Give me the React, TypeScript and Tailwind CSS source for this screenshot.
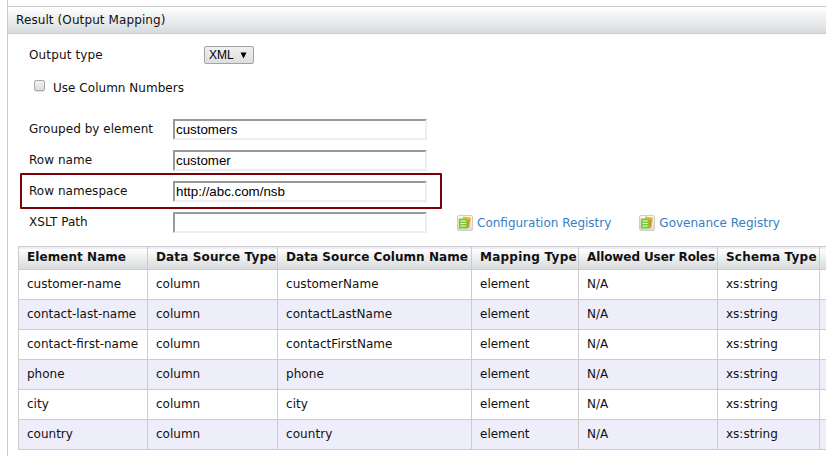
import type { ReactNode } from 'react';

const columns = [
  { title: 'Element Name', width: 'w-[129px]', tracking: 'tracking-[0.06px]' },
  { title: 'Data Source Type', width: 'w-[130px]', tracking: 'tracking-[0.14px]' },
  { title: 'Data Source Column Name', width: 'w-[194px]', tracking: 'tracking-[0.06px]' },
  { title: 'Mapping Type', width: 'w-[107px]', tracking: 'tracking-[0.24px]' },
  { title: 'Allowed User Roles', width: 'w-[139px]', tracking: 'tracking-[-0.1px]' },
  { title: 'Schema Type', width: 'w-[102px]', tracking: 'tracking-[0.2px]' },
  { title: '', width: 'w-[80px]', tracking: 'tracking-normal' },
];

const rows = [
  ['customer-name', 'customerName'],
  ['contact-last-name', 'contactLastName'],
  ['contact-first-name', 'contactFirstName'],
  ['phone', 'phone'],
  ['city', 'city'],
  ['country', 'country'],
].map(([element, source]) => [element, 'column', source, 'element', 'N/A', 'xs:string', '']);

function RegistryIcon() {
  return (
    <svg width="16" height="16" viewBox="0 0 16 16" className="shrink-0">
      <defs>
        <linearGradient id="tile" x1="0" y1="0" x2="0" y2="1">
          <stop offset="0" stopColor="#fafafa" />
          <stop offset="1" stopColor="#dcdcdc" />
        </linearGradient>
      </defs>
      <rect x="0.5" y="0.5" width="15" height="15" rx="1.5" fill="url(#tile)" stroke="#cdcdcd" />
      <path d="M6 1.5 14 2.5 12.3 13.2 6 12.5Z" fill="#f5bd1c" />
      <path d="M10.5 5 12.6 4 11.4 12.8 10.5 13Z" fill="#c58a1a" />
      <path d="M1.8 3.5H10.2V13.6H1.8Z" fill="#7fc63c" />
      <path d="M3.5 6H8.7M3.5 8.5H8.7M3.5 11H8.7" stroke="#f1fae0" strokeWidth="1.2" />
    </svg>
  );
}

function RegistryLink({ children }: { children: ReactNode }) {
  return (
    <a className="flex items-center gap-1 whitespace-nowrap text-[#3580c4]">
      <RegistryIcon />
      <span>{children}</span>
    </a>
  );
}

function Field({ label, value, children }: { label: string; value: string; children?: ReactNode }) {
  return (
    <div className="flex h-[31px] items-start">
      <label className="w-[144px] pt-[2px] leading-4 tracking-[0.04px]">{label}</label>
      <input
        defaultValue={value}
        className="h-[21px] w-[254px] border-2 border-t-[#999999] border-r-[#eeeeee] border-b-[#eeeeee] border-l-[#999999] bg-white px-px font-['Liberation_Sans',Arial,sans-serif] text-[13.333px] text-black outline-none"
      />
      {children}
    </div>
  );
}

export default function App() {
  return (
    <div className="h-[456px] w-[826px] overflow-hidden bg-white pl-[7px] font-['DejaVu_Sans',Verdana,sans-serif] text-xs text-[#111111]">
      <div className="relative h-full border-l border-[#cccccc] pt-[6px]">
        <header className="h-7 border-y border-[#cccccc] bg-linear-to-b from-white to-[#d8dbdd] pl-2 leading-[26px] tracking-[0.1px]">
          Result (Output Mapping)
        </header>

        <form className="pl-[21px]">
          <div className="flex h-[41px] items-start pt-3">
            <label className="w-[175px] pt-px leading-4 tracking-[0.14px]">Output type</label>
            <button
              type="button"
              className="flex h-[18px] w-[50px] items-center justify-between rounded-[2px] border border-[#a3a3a3] bg-linear-to-b from-[#f0f0f0] to-[#dedede] pr-[6px] pl-1 font-['Liberation_Sans',Arial,sans-serif] text-xs text-black"
            >
              XML
              <svg width="7" height="7" viewBox="0 0 7 7">
                <path d="M0.5 0.5H6.5L3.5 6.5Z" fill="currentColor" />
              </svg>
            </button>
          </div>
          <div className="flex h-11 items-start pt-1 pl-[5px]">
            <input
              type="checkbox"
              className="mt-px h-[11px] w-[11px] appearance-none rounded-[2px] border border-[#a8a8a8] bg-linear-to-b from-[#f2f2f2] to-[#dddddd] shadow-[0_1px_0_#e5e5e5]"
            />
            <label className="pt-px pl-2 leading-4 tracking-[0.03px]">Use Column Numbers</label>
          </div>
          <Field label="Grouped by element" value="customers" />
          <Field label="Row name" value="customer" />
          <Field label="Row namespace" value="http://abc.com/nsb" />
          <Field label="XSLT Path" value="">
            <div className="flex gap-7 pt-[3px] pl-[30px] leading-4">
              <RegistryLink>Configuration Registry</RegistryLink>
              <RegistryLink>Govenance Registry</RegistryLink>
            </div>
          </Field>
        </form>

        <div className="pointer-events-none absolute top-[173px] left-3 h-9 w-[422px] rounded-[1px] border-2 border-[#7c0008]" />

        <div className="mt-[3px] ml-[10px] w-[882px] border-t border-[#cccccc]">
          <div className="flex h-[23px] bg-[#eeeefa] font-bold">
            {columns.map((column, i) => (
              <div
                key={i}
                className={`${column.width} shrink-0 border-b border-l border-[#cccccc] pt-[2px]`}
              >
                <div
                  className={`${column.tracking} h-5 bg-linear-to-b from-white to-[#d8dadc] pl-2 leading-4 whitespace-nowrap`}
                >
                  {column.title}
                </div>
              </div>
            ))}
          </div>
          {rows.map((row, r) => (
            <div key={r} className={`flex h-[30px] ${r % 2 ? 'bg-[#eeeefa]' : 'bg-white'}`}>
              {row.map((cell, i) => (
                <div
                  key={i}
                  className={`${columns[i].width} shrink-0 border-b border-l border-[#cccccc] pl-2 leading-7 whitespace-nowrap ${i === 2 ? 'tracking-[0.06px]' : ''}`}
                >
                  {cell}
                </div>
              ))}
            </div>
          ))}
        </div>
      </div>
    </div>
  );
}
